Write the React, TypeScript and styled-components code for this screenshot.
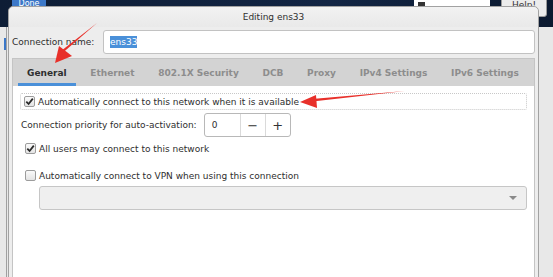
import styled, { createGlobalStyle } from 'styled-components';

const GlobalStyle = createGlobalStyle`
  html, body { margin: 0; padding: 0; overflow: hidden; }
  body { font-family: 'DejaVu Sans', sans-serif; }
`;

const Desktop = styled.div`
  position: relative;
  width: 553px;
  height: 277px;
  overflow: hidden;
  background: #e8e8e8;
`;

const TopStrip = styled.div`
  position: relative;
  height: 27px;
  background: linear-gradient(to right, #0e1d35, #122544 60%, #0c1a30);
`;

const DoneButton = styled.div`
  position: absolute;
  left: 12px;
  top: -3px;
  width: 34px;
  height: 11px;
  border-radius: 3px;
  background: #3c78c8;
  color: #fff;
  font-size: 8px;
  line-height: 9px;
  display: flex;
  align-items: flex-end;
  justify-content: center;
`;

const HelpButton = styled.div`
  position: absolute;
  left: 501px;
  top: -6px;
  width: 46px;
  height: 23px;
  border-radius: 3px;
  border: 1px solid #9a9a9a;
  background: #ececec;
  color: #333;
  font-size: 9px;
  display: flex;
  align-items: flex-end;
  justify-content: center;
  padding-bottom: 6px;
  box-sizing: border-box;
`;

const KeyboardPanel = styled.div`
  position: absolute;
  left: 414px;
  top: 0;
  width: 76px;
  height: 6px;
  background: #fff;
  display: flex;
  align-items: flex-end;
  padding-left: 4px;
  box-sizing: border-box;
`;

const KeyIcon = styled.span`
  width: 7px;
  height: 4px;
  background: #333;
`;

const SideLine = styled.div`
  position: absolute;
  left: 6px;
  top: 27px;
  bottom: 0;
  width: 1px;
  background: #a0a0a0;
`;

const SideBlue = styled.div`
  position: absolute;
  left: 4px;
  top: 38px;
  width: 2px;
  height: 12px;
  background: #3c78c8;
`;

const Window = styled.div`
  position: absolute;
  left: 8px;
  top: 6px;
  width: 531px;
  height: 290px;
  box-sizing: border-box;
  border: 1px solid #a2a2a2;
  border-radius: 5px 5px 0 0;
  background: #ededed;
  display: flex;
  flex-direction: column;
`;

const TitleBar = styled.div`
  height: 20px;
  display: flex;
  align-items: center;
  justify-content: center;
  font-size: 9px;
  color: #2e2e2e;
  border-radius: 5px 5px 0 0;
  background: linear-gradient(#f2f2f2, #e9e9e9);
`;

const Body = styled.div`
  padding: 3px 3px 0 3px;
  display: flex;
  flex-direction: column;
`;

const NameRow = styled.div`
  display: flex;
  align-items: center;
  height: 24px;
  gap: 8px;
  font-size: 9px;
  color: #2e2e2e;
`;

const NameLabel = styled.span`
  width: 83px;
  white-space: nowrap;
`;

const NameInput = styled.div`
  flex: 1;
  height: 24px;
  box-sizing: border-box;
  border: 1px solid #c2c2c2;
  border-radius: 3px;
  background: #fff;
  display: flex;
  align-items: center;
  padding-left: 6px;
`;

const Selected = styled.span`
  background: #4a90d9;
  color: #fff;
  padding: 1px 0;
`;

const Notebook = styled.div`
  margin-top: 4px;
  border: 1px solid #c4c4c4;
  border-bottom: none;
  background: #fff;
  height: 230px;
`;

const TabStrip = styled.div`
  display: flex;
  gap: 5.7px;
  height: 27px;
  padding-left: 5px;
  background: #d3d3d3;
`;

const Tab = styled.div<{ $active?: boolean }>`
  padding: 0 9px;
  display: flex;
  align-items: center;
  font-size: 9px;
  font-weight: bold;
  color: ${(p) => (p.$active ? '#2e2e2e' : '#8d8d8d')};
  box-shadow: ${(p) => (p.$active ? 'inset 0 -3px 0 #4a90d9' : 'none')};
  white-space: nowrap;
`;

const Page = styled.div`
  padding: 7px 7px 0 7px;
  display: flex;
  flex-direction: column;
  font-size: 9px;
  color: #2e2e2e;
`;

const CheckRow = styled.div<{ $focus?: boolean; $top?: number }>`
  display: flex;
  align-items: center;
  gap: 3px;
  height: 15px;
  margin-top: ${(p) => p.$top ?? 0}px;
  padding-left: ${(p) => (p.$focus ? '3px' : '4px')};
  border: 1px ${(p) => (p.$focus ? 'dotted #c8c8c8' : 'solid transparent')};
  border-radius: 2px;
`;

const Box = styled.span`
  width: 11px;
  height: 11px;
  box-sizing: border-box;
  border: 1px solid #9c9c9c;
  border-radius: 2px;
  background: linear-gradient(#fafafa, #e4e4e4);
  display: flex;
  align-items: center;
  justify-content: center;
`;

const PriorityRow = styled.div`
  display: flex;
  align-items: center;
  gap: 7px;
  margin-top: 3px;
  height: 24px;
  padding-left: 1px;
`;

const Spin = styled.div`
  display: flex;
  height: 24px;
  box-sizing: border-box;
  border: 1px solid #b8b8b8;
  border-radius: 3px;
  background: #fff;
`;

const SpinEntry = styled.div`
  width: 35px;
  display: flex;
  align-items: center;
  padding-left: 7px;
  box-sizing: border-box;
`;

const SpinButton = styled.div`
  width: 24px;
  display: flex;
  align-items: center;
  justify-content: center;
  border-left: 1px solid #dadada;
  font-size: 13px;
  color: #333;
`;

const Combo = styled.div`
  margin: 2px 0 0 19px;
  height: 24px;
  box-sizing: border-box;
  border: 1px solid #c6c6c6;
  border-radius: 3px;
  background: #efefef;
  display: flex;
  align-items: center;
  justify-content: flex-end;
  padding-right: 9px;
`;

const Arrows = styled.svg`
  position: absolute;
  left: 0;
  top: 0;
  pointer-events: none;
`;

function Check({ checked }: { checked?: boolean }) {
  return (
    <Box>
      {checked && (
        <svg width="9" height="9" viewBox="0 0 9 9">
          <path d="M1.3 4.6 L3.6 7 L7.8 1.6" fill="none" stroke="#2a2a2a" strokeWidth="1.8" />
        </svg>
      )}
    </Box>
  );
}

export default function App() {
  return (
    <>
      <GlobalStyle />
      <Desktop>
        <TopStrip>
          <DoneButton>Done</DoneButton>
          <KeyboardPanel>
            <KeyIcon />
          </KeyboardPanel>
          <HelpButton>Help!</HelpButton>
        </TopStrip>
        <SideBlue />
        <SideLine />
        <Window>
          <TitleBar>Editing ens33</TitleBar>
          <Body>
            <NameRow>
              <NameLabel>Connection name:</NameLabel>
              <NameInput>
                <Selected>ens33</Selected>
              </NameInput>
            </NameRow>
            <Notebook>
              <TabStrip>
                <Tab $active>General</Tab>
                <Tab>Ethernet</Tab>
                <Tab>802.1X Security</Tab>
                <Tab>DCB</Tab>
                <Tab>Proxy</Tab>
                <Tab>IPv4 Settings</Tab>
                <Tab>IPv6 Settings</Tab>
              </TabStrip>
              <Page>
                <CheckRow $focus>
                  <Check checked />
                  Automatically connect to this network when it is available
                </CheckRow>
                <PriorityRow>
                  Connection priority for auto-activation:
                  <Spin>
                    <SpinEntry>0</SpinEntry>
                    <SpinButton>−</SpinButton>
                    <SpinButton>+</SpinButton>
                  </Spin>
                </PriorityRow>
                <CheckRow $top={3}>
                  <Check checked />
                  All users may connect to this network
                </CheckRow>
                <CheckRow $top={10}>
                  <Check />
                  Automatically connect to VPN when using this connection
                </CheckRow>
                <Combo>
                  <svg width="8" height="5" viewBox="0 0 8 5">
                    <path d="M0 0 H8 L4 4 Z" fill="#8a8a8a" />
                  </svg>
                </Combo>
              </Page>
            </Notebook>
          </Body>
        </Window>
        <Arrows width="553" height="277" viewBox="0 0 553 277">
          <path d="M97 23 L61 51 L62.5 53 Z" fill="#e8302a" />
          <path d="M55 63 L59 46 L72 56 Z" fill="#e8302a" />
          <path d="M405 91 L312 99 L312.5 101.5 Z" fill="#e8302a" />
          <path d="M300 102 L316 95 L317 108 Z" fill="#e8302a" />
        </Arrows>
      </Desktop>
    </>
  );
}
